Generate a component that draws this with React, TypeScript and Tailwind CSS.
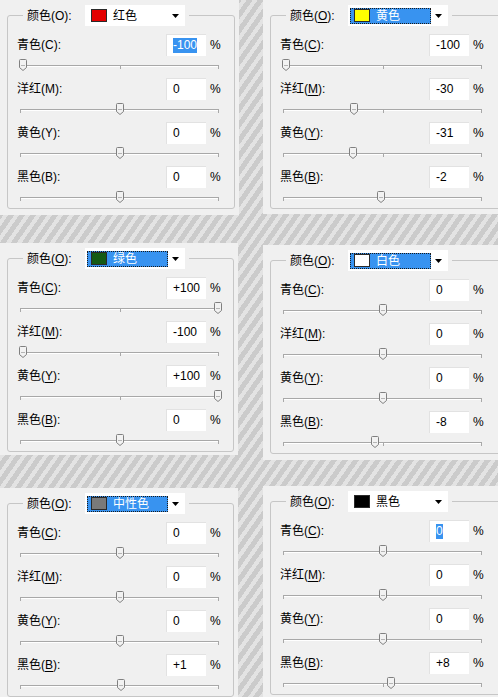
import React from "react";

type Row = { label: string; key: string; value: string; num: number; selected?: boolean };

type PanelData = {
  name: string;
  swatch: string;
  highlight: boolean;
  underline: boolean;
  box: string;
  rows: Row[];
};

const names = [
  { label: "青色", key: "C" },
  { label: "洋红", key: "M" },
  { label: "黄色", key: "Y" },
  { label: "黑色", key: "B" },
];

const makeRows = (values: string[], selected = -1): Row[] =>
  values.map((v, i) => ({
    ...names[i],
    value: v,
    num: parseInt(v, 10),
    selected: i === selected,
  }));

const left: PanelData[] = [
  {
    name: "红色",
    swatch: "bg-[#e30000]",
    highlight: false,
    underline: false,
    box: "w-[239px] h-[215px]",
    rows: makeRows(["-100", "0", "0", "0"], 0),
  },
  {
    name: "绿色",
    swatch: "bg-[#145a14]",
    highlight: true,
    underline: true,
    box: "w-[238px] mt-[28px] h-[212px]",
    rows: makeRows(["+100", "-100", "+100", "0"]),
  },
  {
    name: "中性色",
    swatch: "bg-[#7a7a7a]",
    highlight: true,
    underline: true,
    box: "w-[238px] mt-[33px] flex-1",
    rows: makeRows(["0", "0", "0", "+1"]),
  },
];

// right-hand panels run past the edge of the picture
const right: PanelData[] = [
  {
    name: "黄色",
    swatch: "bg-[#ffff00]",
    highlight: true,
    underline: true,
    box: "w-[250px] h-[214px]",
    rows: makeRows(["-100", "-30", "-31", "-2"]),
  },
  {
    name: "白色",
    swatch: "bg-white",
    highlight: true,
    underline: true,
    box: "w-[250px] mt-[31px] h-[215px]",
    rows: makeRows(["0", "0", "0", "-8"]),
  },
  {
    name: "黑色",
    swatch: "bg-black",
    highlight: false,
    underline: true,
    box: "w-[250px] mt-[26px] flex-1",
    rows: makeRows(["0", "0", "0", "+8"], 0),
  },
];

function Label({ text, k, underline }: { text: string; k: string; underline: boolean }) {
  return (
    <span className="whitespace-nowrap">
      {text}(
      <span className={underline ? "underline underline-offset-2" : ""}>{k}</span>
      ):
    </span>
  );
}

function Thumb() {
  return (
    <svg width="8" height="12" viewBox="0 0 8 12">
      <path
        d="M1.5 .5h5a1 1 0 0 1 1 1v7L4 11.5.5 8.5v-7a1 1 0 0 1 1-1z"
        fill="#f2f2f2"
        stroke="#808080"
      />
      <path d="M2 6.5h4" stroke="#b5b5b5" />
    </svg>
  );
}

function Slider({ num }: { num: number }) {
  // thumb centre: 0 at the middle tick, ±100 near the ends
  const x = 96 + num * 0.975;
  return (
    <div className="relative ml-[3px] h-[20px] w-[199px]">
      <div className="absolute left-0 right-0 top-[9px] h-px bg-[#a8a8a8]" />
      <div className="absolute left-0 right-0 top-[10px] h-px bg-white" />
      <div className="absolute left-0 top-[9px] h-[4px] w-px bg-[#a8a8a8]" />
      <div className="absolute left-[100px] top-[9px] h-[4px] w-px bg-[#a8a8a8]" />
      <div className="absolute right-0 top-[9px] h-[4px] w-px bg-[#a8a8a8]" />
      <div className="absolute top-[3px] flex" style={{ left: x }}>
        <Thumb />
      </div>
    </div>
  );
}

function Panel({ p }: { p: PanelData }) {
  return (
    <div className={`shrink-0 overflow-hidden bg-[#f0f0f0] pt-[5px] ${p.box}`}>
      <fieldset className="ml-[7px] mr-[4px] min-w-0 rounded-[3px] border border-[#c6c6c6] pl-[9px] pt-[8px]">
        <legend className="ml-[6px] px-[4px]">
          <div className="flex items-center">
            <div className="w-[58px]">
              <Label text="颜色" k="O" underline={p.underline} />
            </div>
            <div className="flex h-[21px] w-[100px] items-center bg-white">
              <div
                className={
                  p.highlight
                    ? "ml-[2px] flex h-[16px] w-[81px] items-center border border-dotted border-[#1b1b1b] bg-[#3893f0] text-white"
                    : "ml-[2px] flex h-[16px] w-[81px] items-center border border-transparent"
                }
              >
                <span className={`ml-[3px] h-[13px] w-[16px] border border-[#2a2a2a] ${p.swatch}`} />
                <span className="ml-[6px]">{p.name}</span>
              </div>
              <svg className="ml-auto mr-[6px]" width="7" height="4" viewBox="0 0 7 4">
                <path d="M0 0h7L3.5 4z" fill="#000" />
              </svg>
            </div>
          </div>
        </legend>
        <div className="flex w-[204px] flex-col gap-[2px]">
          {p.rows.map((r) => (
            <div key={r.key} className="flex flex-col">
              <div className="flex h-[22px] items-center">
                <div className="flex-1">
                  <Label text={r.label} k={r.key} underline={p.underline} />
                </div>
                <div className="flex h-[22px] w-[40px] items-center border-t border-l border-[#e2e2e2] bg-white pl-[6px]">
                  <span
                    className={
                      r.selected
                        ? "bg-[#3893f0] leading-[15px] text-white"
                        : "leading-[15px]"
                    }
                  >
                    {r.value}
                  </span>
                </div>
                <span className="ml-[4px] w-[11px]">%</span>
              </div>
              <Slider num={r.num} />
            </div>
          ))}
        </div>
      </fieldset>
    </div>
  );
}

export default function App() {
  return (
    <div className="flex h-[697px] w-[498px] gap-[24px] overflow-hidden bg-[repeating-linear-gradient(125deg,#e3e3e3_0px,#e3e3e3_4px,#cbcbcb_4px,#cbcbcb_9px)] font-['Liberation_Sans','Noto_Sans_CJK_SC',sans-serif] text-[12px] leading-none text-black">
      <div className="flex w-[239px] shrink-0 flex-col">
        {left.map((p) => (
          <Panel key={p.name} p={p} />
        ))}
      </div>
      <div className="flex w-[250px] shrink-0 flex-col">
        {right.map((p) => (
          <Panel key={p.name} p={p} />
        ))}
      </div>
    </div>
  );
}
